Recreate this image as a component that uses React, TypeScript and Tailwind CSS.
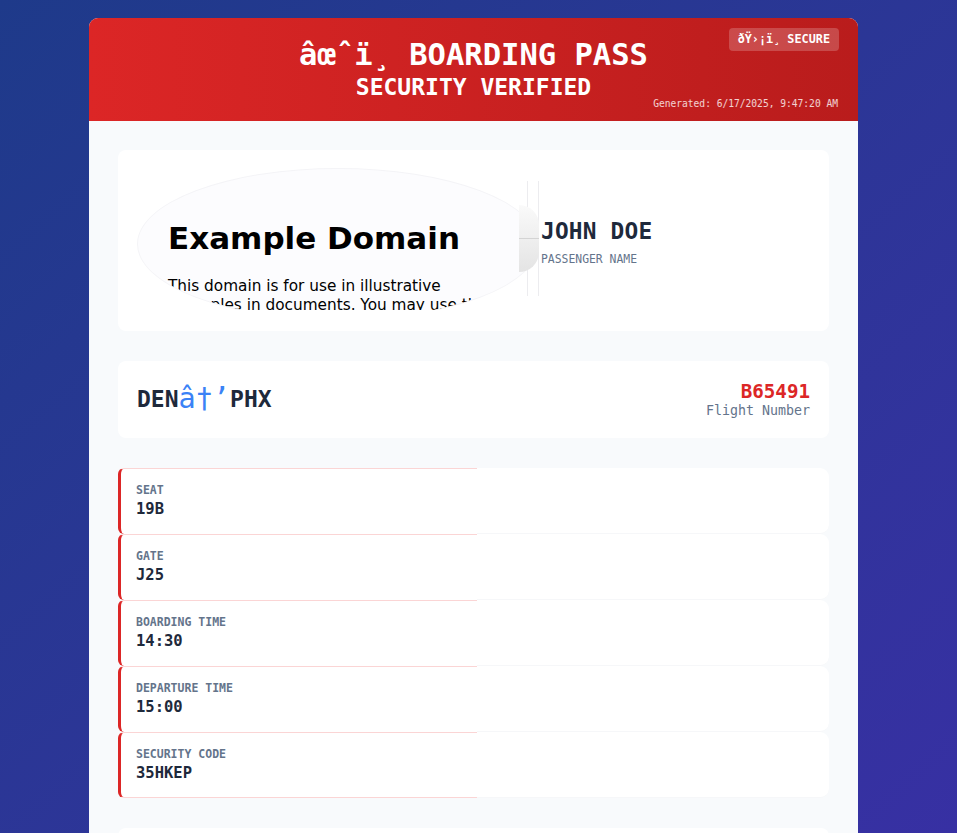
import React from "react";

const mono = "font-['DejaVu_Sans_Mono',monospace]";

const details = [
  { label: "SEAT", value: "19B" },
  { label: "GATE", value: "J25" },
  { label: "BOARDING TIME", value: "14:30" },
  { label: "DEPARTURE TIME", value: "15:00" },
  { label: "SECURITY CODE", value: "35HKEP" },
];

function FakeFrame() {
  // stand-in for the embedded example.com frame (oval clipped)
  return (
    <div className="relative w-[404px] h-[142px] shrink-0 overflow-hidden">
      <div className="w-[402px] h-[152px] rounded-[50%] overflow-hidden bg-[#fcfcfe] border border-[#f4f4f7] font-['DejaVu_Sans',sans-serif] text-black">
        <div className="pl-[30px] pt-[51px] pr-[40px]">
          <h1 className="text-[31px] font-bold leading-[37px]">Example Domain</h1>
          <p className="mt-[20px] text-[15.3px] leading-[19px]">
            This domain is for use in illustrative examples in documents. You may use this domain in literature
            without prior coordination or asking for permission.
          </p>
        </div>
      </div>
      <div className="absolute left-[390px] top-[13px] w-[12px] h-[115px] border-x border-[#ececef] bg-white/60" />
      <div className="absolute left-[382px] top-[37px] w-[20px] h-[67px] rounded-r-full bg-gradient-to-b from-[#fafafa] to-[#e4e4e4]" />
      <div className="absolute left-[382px] top-[70px] w-[20px] h-px bg-[#d4d4d4]" />
    </div>
  );
}

export default function App() {
  return (
    <div className="h-screen overflow-hidden bg-gradient-to-br from-[#1e3a8a] to-[#3730a3] pt-[18px] pl-[89px]">
      <div className={`w-[769px] rounded-t-[9px] overflow-hidden bg-[#f8fafc] ${mono}`}>
        <header className="relative h-[103px] bg-gradient-to-r from-[#dc2626] to-[#b91c1c] pt-[18px] text-center text-white">
          <div className="text-[30.5px] font-bold leading-[38px]">âœˆï¸ BOARDING PASS</div>
          <div className="text-[23px] font-bold leading-[27px]">SECURITY VERIFIED</div>
          <div className="absolute top-[10px] right-[19px] rounded-[4px] bg-white/20 px-[9px] py-[4px] text-[11.8px] font-bold leading-[15px]">
            {"\u00f0\u0178\u203a\u00a1\u00ef\u00b8 SECURE"}
          </div>
          <div className="absolute bottom-[11px] right-[20px] text-[9.6px] leading-[12px] text-white/80">
            Generated: 6/17/2025, 9:47:20 AM
          </div>
        </header>

        <div className="flex flex-col gap-[30px] px-[29px] pt-[29px]">
          <section className="flex items-center h-[181px] rounded-lg bg-white pl-[19px] pb-[4px]">
            <FakeFrame />
            <div className="flex flex-col ml-0 mt-[6px]">
              <span className="text-[22.8px] font-bold leading-[28px] tracking-[0.2px] text-[#1e293b]">JOHN DOE</span>
              <span className="mt-[7px] text-[11.4px] leading-[14px] text-[#64748b]">PASSENGER NAME</span>
            </div>
          </section>

          <section className="flex items-center justify-between h-[77px] rounded-lg bg-white px-[19px]">
            <div className="flex items-center text-[23px] font-bold text-[#1e293b]">
              <span>DEN</span>
              <span className="text-[28.5px] font-normal text-[#3b82f6]">â†’</span>
              <span>PHX</span>
            </div>
            <div className="flex flex-col items-end pt-[1px]">
              <span className="text-[19.2px] font-bold leading-[22px] text-[#dc2626]">B65491</span>
              <span className="text-[13.3px] leading-[16px] text-[#64748b]">Flight Number</span>
            </div>
          </section>

          <section className="flex flex-col">
            {details.map((d, i) => (
              <div key={d.label} className="flex h-[66px]">
                <div
                  className={`w-[359px] bg-white rounded-l-[6px] border-l-[3px] border-l-[#dc2626] border-t border-t-[#fbd5d5] ${
                    i === details.length - 1 ? "border-b border-b-[#fbd5d5]" : ""
                  } pl-[15px] pt-[14px]`}
                >
                  <div className="text-[11.5px] font-bold leading-[14px] text-[#64748b]">{d.label}</div>
                  <div className="mt-[3px] text-[15.5px] font-bold leading-[19px] text-[#1e293b]">{d.value}</div>
                </div>
                <div className="flex-1 bg-white rounded-r-[9px] border-b border-[#f6f7f9]" />
              </div>
            ))}
          </section>

          <section className="h-[140px] rounded-lg bg-white" />
        </div>
      </div>
    </div>
  );
}
